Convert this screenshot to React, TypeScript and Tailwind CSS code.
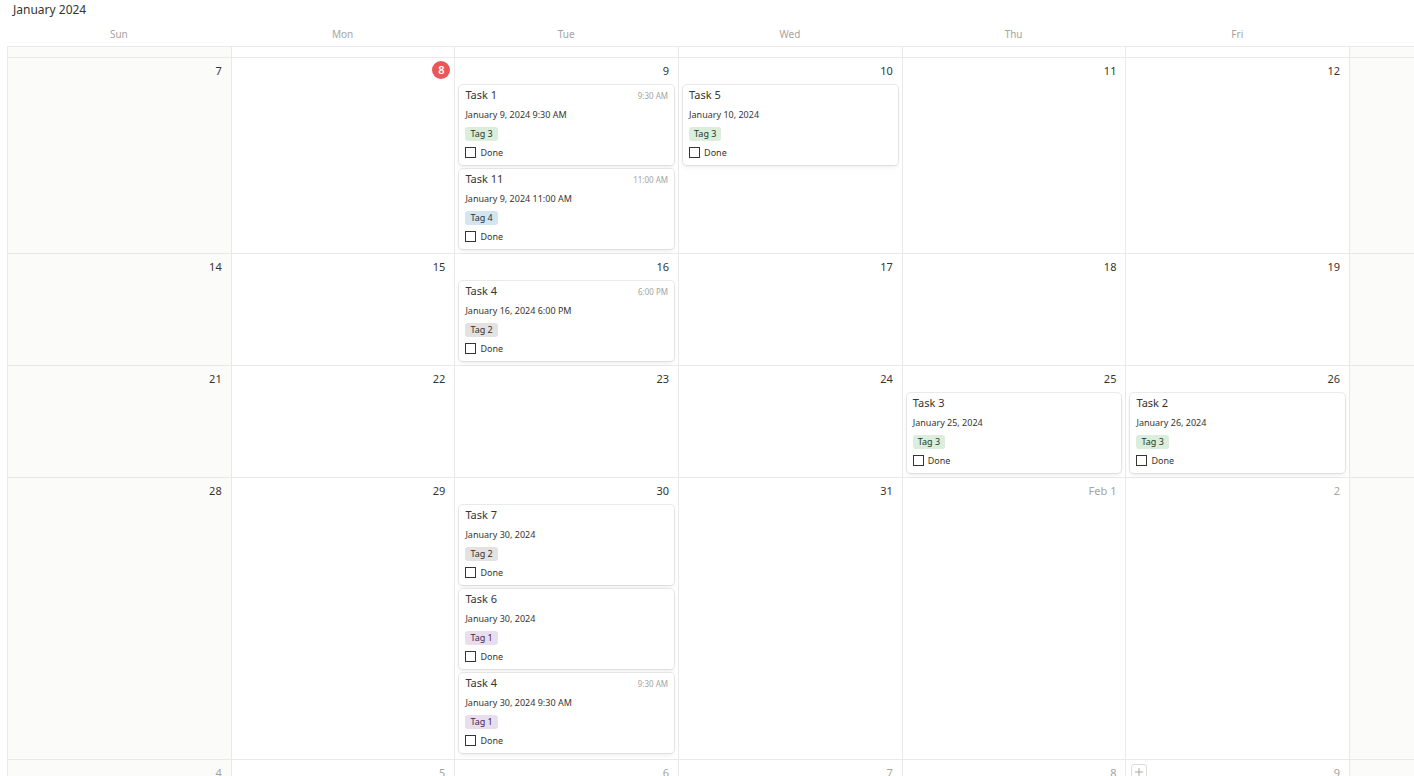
import { Plus } from 'lucide-react';

type Tag = 'Tag 1' | 'Tag 2' | 'Tag 3' | 'Tag 4';

interface Task {
  title: string;
  time?: string;
  date: string;
  tag: Tag;
}

interface Day {
  label: string;
  muted?: boolean;
  today?: boolean;
  add?: boolean;
  tasks?: Task[];
}

interface Week {
  height: string;
  days: Day[];
}

const tagStyles: Record<Tag, string> = {
  'Tag 1': 'bg-[#e8deee] text-[#412454]',
  'Tag 2': 'bg-[#e3e2e0] text-[#32302c]',
  'Tag 3': 'bg-[#dbeddb] text-[#1c3829]',
  'Tag 4': 'bg-[#d3e5ef] text-[#183347]',
};

const dayNames = ['Sun', 'Mon', 'Tue', 'Wed', 'Thu', 'Fri', 'Sat'];

const weeks: Week[] = [
  {
    height: 'h-[196px]',
    days: [
      { label: '7' },
      { label: '8', today: true },
      {
        label: '9',
        tasks: [
          { title: 'Task 1', time: '9:30 AM', date: 'January 9, 2024 9:30 AM', tag: 'Tag 3' },
          { title: 'Task 11', time: '11:00 AM', date: 'January 9, 2024 11:00 AM', tag: 'Tag 4' },
        ],
      },
      { label: '10', tasks: [{ title: 'Task 5', date: 'January 10, 2024', tag: 'Tag 3' }] },
      { label: '11' },
      { label: '12' },
      { label: '13' },
    ],
  },
  {
    height: 'h-[112px]',
    days: [
      { label: '14' },
      { label: '15' },
      {
        label: '16',
        tasks: [{ title: 'Task 4', time: '6:00 PM', date: 'January 16, 2024 6:00 PM', tag: 'Tag 2' }],
      },
      { label: '17' },
      { label: '18' },
      { label: '19' },
      { label: '20' },
    ],
  },
  {
    height: 'h-[112px]',
    days: [
      { label: '21' },
      { label: '22' },
      { label: '23' },
      { label: '24' },
      { label: '25', tasks: [{ title: 'Task 3', date: 'January 25, 2024', tag: 'Tag 3' }] },
      { label: '26', tasks: [{ title: 'Task 2', date: 'January 26, 2024', tag: 'Tag 3' }] },
      { label: '27' },
    ],
  },
  {
    height: 'h-[282px]',
    days: [
      { label: '28' },
      { label: '29' },
      {
        label: '30',
        tasks: [
          { title: 'Task 7', date: 'January 30, 2024', tag: 'Tag 2' },
          { title: 'Task 6', date: 'January 30, 2024', tag: 'Tag 1' },
          { title: 'Task 4', time: '9:30 AM', date: 'January 30, 2024 9:30 AM', tag: 'Tag 1' },
        ],
      },
      { label: '31' },
      { label: 'Feb 1', muted: true },
      { label: '2', muted: true },
      { label: '3', muted: true },
    ],
  },
  {
    height: 'h-[112px]',
    days: [
      { label: '4', muted: true },
      { label: '5', muted: true },
      { label: '6', muted: true },
      { label: '7', muted: true },
      { label: '8', muted: true },
      { label: '9', muted: true, add: true },
      { label: '10', muted: true },
    ],
  },
];

function TaskCard({ task }: { task: Task }) {
  return (
    <div className="h-[80px] shrink-0 rounded-[4px] bg-white px-[6px] pt-[1px] shadow-[0_0_0_1px_rgba(15,15,15,0.08),0_2px_4px_rgba(15,15,15,0.08)]">
      <div className="flex h-[19px] items-center justify-between">
        <span className="text-[11px] text-[#37352f]">{task.title}</span>
        {task.time && <span className="text-[8px] text-[#a5a4a0]">{task.time}</span>}
      </div>
      <div className="flex h-[19px] items-center text-[9px] text-[#37352f]">{task.date}</div>
      <div className="flex h-[19px] items-center">
        <span className={`rounded-[3px] px-[5px] text-[9px] leading-[14px] ${tagStyles[task.tag]}`}>
          {task.tag}
        </span>
      </div>
      <div className="flex h-[19px] items-center gap-[4px]">
        <span className="h-[11px] w-[11px] border border-[#37352f] bg-white" />
        <span className="text-[9px] text-[#37352f]">Done</span>
      </div>
    </div>
  );
}

function DayCell({ day, index }: { day: Day; index: number }) {
  const weekend = index === 0 || index === 6;
  return (
    <div className={`flex min-w-0 flex-col border-l border-[#e9e9e7] ${weekend ? 'bg-[#fbfbfa]' : 'bg-white'}`}>
      <div className="flex h-[27px] shrink-0 items-start justify-between">
        {day.add ? (
          <span className="ml-[5px] mt-[4px] flex h-[16px] w-[16px] items-center justify-center rounded-[3px] border border-[#dcdcda] bg-white text-[#8f8e8a]">
            <Plus size={12} strokeWidth={1.5} />
          </span>
        ) : (
          <span />
        )}
        {day.today ? (
          <span className="mr-[4px] mt-[3px] flex h-[18px] w-[18px] items-center justify-center rounded-full bg-[#eb5757] text-[11px] font-semibold text-white">
            {day.label}
          </span>
        ) : (
          <span
            className={`mr-[9px] mt-[6px] text-[11px] leading-[14px] ${day.muted ? 'text-[#a5a4a0]' : 'text-[#37352f]'}`}
          >
            {day.label}
          </span>
        )}
      </div>
      <div className="flex flex-col gap-[4px] px-[4px]">
        {day.tasks?.map((t, i) => <TaskCard key={i} task={t} />)}
      </div>
    </div>
  );
}

export default function App() {
  return (
    <div className="h-screen overflow-hidden bg-white font-['Noto_Sans',sans-serif]">
      <div className="flex h-[18px] items-center pl-[13px] pt-[1px] text-[12px] text-[#37352f]">January 2024</div>
      <div className="pl-[7px]">
        <div className="w-[1566px]">
          <div className="grid h-[28px] grid-cols-[repeat(7,223.7px)] items-center pt-[4px]">
            {dayNames.map((d) => (
              <div key={d} className="text-center text-[10px] text-[#a5a4a0]">
                {d}
              </div>
            ))}
          </div>
          <div className="grid h-[11px] grid-cols-[repeat(7,223.7px)] border-t border-[#e9e9e7]">
            {dayNames.map((d, i) => (
              <div
                key={d}
                className={`border-l border-[#e9e9e7] ${i === 0 || i === 6 ? 'bg-[#fbfbfa]' : 'bg-white'}`}
              />
            ))}
          </div>
          {weeks.map((w, wi) => (
            <div
              key={wi}
              className={`grid grid-cols-[repeat(7,223.7px)] border-t border-[#e9e9e7] ${w.height}`}
            >
              {w.days.map((d, i) => (
                <DayCell key={i} day={d} index={i} />
              ))}
            </div>
          ))}
        </div>
      </div>
    </div>
  );
}
